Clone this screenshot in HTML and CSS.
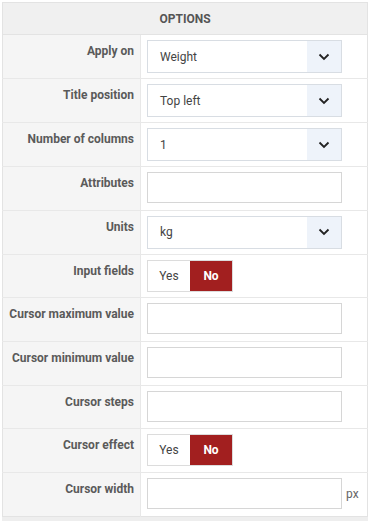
FILE: index.html
```html
<!DOCTYPE html>
<html lang="en">
<head>
  <meta charset="UTF-8" />
  <meta name="viewport" content="width=device-width, initial-scale=1.0" />
  <title>Options</title>
  <link rel="stylesheet" href="styles.css">
</head>
<body>

<div class="panel">
  <table class="options">
    <thead>
      <tr><th colspan="2" class="head">OPTIONS</th></tr>
    </thead>
    <tbody>
      <tr>
        <td class="label">Apply on</td>
        <td class="value">
          <div class="select"><span class="select-text">Weight</span><span class="select-arrow"><svg width="12" height="8" viewBox="0 0 12 8"><path d="M1.5 1.5 L6 6 L10.5 1.5" fill="none" stroke="#222" stroke-width="1.8"/></svg></span></div>
        </td>
      </tr>
      <tr>
        <td class="label">Title position</td>
        <td class="value">
          <div class="select"><span class="select-text">Top left</span><span class="select-arrow"><svg width="12" height="8" viewBox="0 0 12 8"><path d="M1.5 1.5 L6 6 L10.5 1.5" fill="none" stroke="#222" stroke-width="1.8"/></svg></span></div>
        </td>
      </tr>
      <tr>
        <td class="label">Number of columns</td>
        <td class="value">
          <div class="select"><span class="select-text">1</span><span class="select-arrow"><svg width="12" height="8" viewBox="0 0 12 8"><path d="M1.5 1.5 L6 6 L10.5 1.5" fill="none" stroke="#222" stroke-width="1.8"/></svg></span></div>
        </td>
      </tr>
      <tr>
        <td class="label">Attributes</td>
        <td class="value"><div class="input"></div></td>
      </tr>
      <tr>
        <td class="label">Units</td>
        <td class="value">
          <div class="select"><span class="select-text">kg</span><span class="select-arrow"><svg width="12" height="8" viewBox="0 0 12 8"><path d="M1.5 1.5 L6 6 L10.5 1.5" fill="none" stroke="#222" stroke-width="1.8"/></svg></span></div>
        </td>
      </tr>
      <tr>
        <td class="label">Input fields</td>
        <td class="value">
          <div class="toggle"><span class="opt">Yes</span><span class="opt on">No</span></div>
        </td>
      </tr>
      <tr>
        <td class="label">Cursor maximum value</td>
        <td class="value"><div class="input"></div></td>
      </tr>
      <tr>
        <td class="label">Cursor minimum value</td>
        <td class="value"><div class="input"></div></td>
      </tr>
      <tr>
        <td class="label">Cursor steps</td>
        <td class="value"><div class="input"></div></td>
      </tr>
      <tr>
        <td class="label">Cursor effect</td>
        <td class="value">
          <div class="toggle"><span class="opt">Yes</span><span class="opt on">No</span></div>
        </td>
      </tr>
      <tr>
        <td class="label">Cursor width</td>
        <td class="value">
          <div class="with-unit"><div class="input"></div><span class="unit">px</span></div>
        </td>
      </tr>
    </tbody>
  </table>
</div>

</body>
</html>
```

FILE: styles.css
```css
* {
  box-sizing: border-box;
}

body {
  margin: 0;
  padding: 2px 2px 0 2px;
  font-family: Roboto, "Liberation Sans", sans-serif;
  background: #fff;
  color: #333;
}

.panel {
  width: 366px;
  border-bottom: 4px solid #eeeeee;
}

.options {
  width: 100%;
  border-collapse: collapse;
  border: 1px solid #e3e3e3;
  font-size: 12px;
}

.head {
  background: #f0f0f0;
  color: #555;
  font-weight: 700;
  font-size: 12px;
  height: 32px;
  text-align: center;
  border-bottom: 1px solid #e3e3e3;
}

.options tbody tr {
  height: 43.7px;
}

.options td {
  border-top: 1px solid #e8e8e8;
  vertical-align: top;
}

.label {
  width: 138px;
  background: #f5f5f5;
  color: #5a5a5a;
  font-weight: 700;
  text-align: right;
  padding: 9px 6px 0 0;
  border-right: 1px solid #e8e8e8;
  white-space: nowrap;
}

.value {
  padding: 5px 6px 5px 6px;
  background: #fff;
}

.select {
  display: flex;
  width: 195px;
  height: 33px;
  border: 1px solid #d8dde3;
  background: #fff;
}

.select-text {
  flex: 1;
  display: flex;
  align-items: center;
  padding-left: 12px;
  color: #444;
  font-size: 12px;
}

.select-arrow {
  width: 34px;
  display: flex;
  align-items: center;
  justify-content: center;
  background: #eef3fa;
}

.input {
  width: 195px;
  height: 31px;
  border: 1px solid #d6d6d6;
  background: #fff;
}

.toggle {
  display: flex;
  width: 86px;
  height: 32px;
  border: 1px solid #dcdcdc;
}

.opt {
  flex: 1;
  display: flex;
  align-items: center;
  justify-content: center;
  font-size: 12px;
  color: #444;
}

.opt.on {
  background: #a21f1f;
  color: #fff;
  font-weight: 700;
}

.with-unit {
  display: flex;
  align-items: center;
  gap: 4px;
}

.unit {
  color: #666;
  font-size: 12px;
}
```
